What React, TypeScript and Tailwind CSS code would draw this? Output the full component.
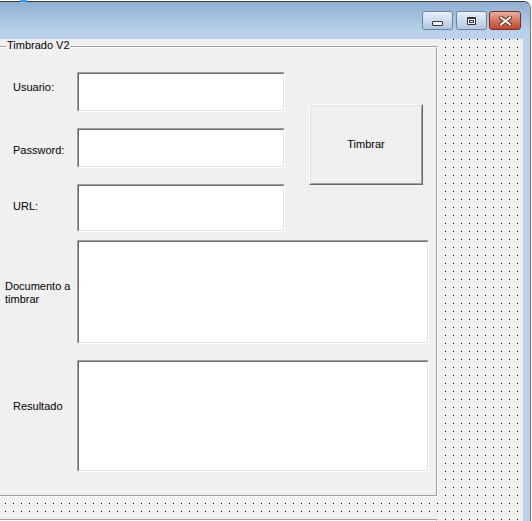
import React from 'react';

// sunken 3D edge used by the text boxes
const TextBox: React.FC<{ className?: string }> = ({ className }) => (
  <div className={`border border-t-[#a0a0a0] border-l-[#a0a0a0] border-b-white border-r-white ${className ?? ''}`}>
    <div className="w-full h-full bg-white border border-t-[#696969] border-l-[#696969] border-b-[#e3e3e3] border-r-[#e3e3e3]" />
  </div>
);

const CaptionButton: React.FC<{ close?: boolean; children: React.ReactNode }> = ({ close, children }) => (
  <div
    className={
      close
        ? 'w-[32px] h-[19px] rounded-[3px] border border-[#7a2c1e] bg-gradient-to-b from-[#eab1a3] via-[#d8735c] to-[#c2452c] flex items-center justify-center'
        : 'w-[31px] h-[19px] rounded-[3px] border border-[#6e84a3] bg-gradient-to-b from-[#eaf1f9] via-[#cddcec] to-[#b2c7df] flex items-center justify-center'
    }
  >
    {children}
  </div>
);

const App: React.FC = () => {
  return (
    <div className="relative w-[532px] h-[521px] overflow-hidden bg-white text-black text-[11px] leading-[13px] font-['Liberation_Sans',Arial,sans-serif]">
      {/* selection handle */}
      <div className="absolute left-[20px] top-0 w-[7px] h-[2px] bg-[#3399ff]" />

      <div className="pt-[1px]">
        <div className="w-[531px] h-[520px] bg-[#b9d1ea] border-t border-r border-t-[#3c3c3c] border-r-[#6b7d94] rounded-tr-[7px] overflow-hidden">
          {/* title bar */}
          <div className="h-[30px] bg-gradient-to-b from-[#8fafd2] to-[#b9d2eb] flex justify-end items-start pt-[9px] pr-[9px]">
            <div className="flex">
              <CaptionButton>
                <div className="mt-[6px] w-[11px] h-[5px] bg-white border border-[#2e3440] rounded-[1px]" />
              </CaptionButton>
              <div className="w-[3px]" />
              <CaptionButton>
                <div className="w-[9px] h-[8px] bg-white border border-[#2e3440] border-t-2 rounded-[1px] p-[1px]">
                  <div className="w-full h-full border border-[#2e3440]" />
                </div>
              </CaptionButton>
              <div className="w-[2px]" />
              <CaptionButton close>
                <svg width="13" height="10" viewBox="0 0 13 10">
                  <path d="M2 1.5 L11 8.5 M11 1.5 L2 8.5" stroke="#5b2a20" strokeWidth="4" strokeLinecap="square" />
                  <path d="M2 1.5 L11 8.5 M11 1.5 L2 8.5" stroke="#ffffff" strokeWidth="2" strokeLinecap="square" />
                </svg>
              </CaptionButton>
            </div>
          </div>

          {/* designer surface */}
          <div className="w-[523px] h-[489px] bg-[#f0f0f0] bg-[linear-gradient(to_bottom,transparent_1px,#f0f0f0_1px),linear-gradient(to_right,#000_1px,transparent_1px)] [background-size:8px_8px] [background-position:5px_0px]">
            {/* Timbrado V2 group */}
            <div className="relative ml-[-4px] mt-[7px] w-[442px] pt-[7px] bg-[#f0f0f0]">
              <span className="absolute left-[10px] top-0 px-[1px] bg-[#f0f0f0]">Timbrado V2</span>
              <div className="h-[451px] border border-t-[#a0a0a0] border-l-[#a0a0a0] border-b-white border-r-white">
                <div className="h-full border border-t-white border-l-white border-b-[#a0a0a0] border-r-[#a0a0a0] pt-[24px]">
                  <div className="flex">
                    <div className="flex flex-col gap-[16px]">
                      <div className="flex">
                        <div className="w-[79px] pl-[15px] pt-[9px]">Usuario:</div>
                        <TextBox className="w-[208px] h-[40px]" />
                      </div>
                      <div className="flex">
                        <div className="w-[79px] pl-[15px] pt-[16px]">Password:</div>
                        <TextBox className="w-[208px] h-[40px]" />
                      </div>
                      <div className="flex">
                        <div className="w-[79px] pl-[15px] pt-[16px]">URL:</div>
                        <TextBox className="w-[208px] h-[48px]" />
                      </div>
                    </div>
                    <div className="ml-[24px] mt-[32px] w-[114px] h-[81px] border border-t-white border-l-white border-b-[#696969] border-r-[#696969]">
                      <div className="w-full h-full border border-t-[#e3e3e3] border-l-[#e3e3e3] border-b-[#a0a0a0] border-r-[#a0a0a0] flex items-center justify-center">
                        Timbrar
                      </div>
                    </div>
                  </div>

                  <div className="flex mt-[8px]">
                    <div className="w-[79px] pl-[7px] pt-[40px]">
                      Documento a
                      <br />
                      timbrar
                    </div>
                    <TextBox className="w-[352px] h-[104px]" />
                  </div>

                  <div className="flex mt-[16px]">
                    <div className="w-[79px] pl-[15px] pt-[40px]">Resultado</div>
                    <TextBox className="w-[352px] h-[112px]" />
                  </div>
                </div>
              </div>
            </div>

            {/* next group, cut off */}
            <div className="ml-[-4px] mt-[15px] w-[442px] pt-[7px] bg-[#f0f0f0]">
              <div className="h-[40px] border border-t-[#a0a0a0] border-l-[#a0a0a0] border-b-white border-r-white">
                <div className="h-full border border-t-white border-l-white border-b-[#a0a0a0] border-r-[#a0a0a0]" />
              </div>
            </div>
          </div>
        </div>
      </div>
    </div>
  );
};

export default App;
